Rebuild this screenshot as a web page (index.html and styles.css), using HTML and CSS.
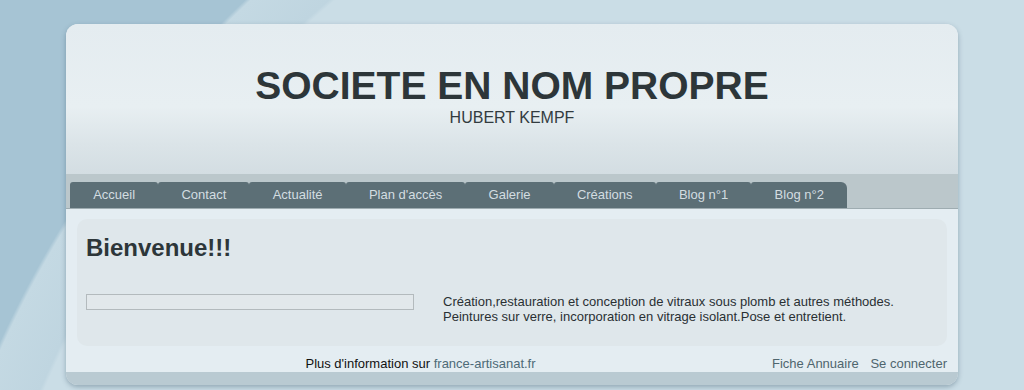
FILE: index.html
```html
<!DOCTYPE html>
<html lang="fr">

<head>
    <meta charset="UTF-8">
    <meta name="viewport" content="width=device-width, initial-scale=1.0">
    <title>Societe en nom propre</title>
    <link rel="stylesheet" href="styles.css">
</head>

<body>
    <div class="page">
        <!-- en-tete -->
        <div class="header">
            <div class="title">SOCIETE EN NOM PROPRE</div>
            <div class="subtitle">HUBERT KEMPF</div>
        </div>

        <!-- menu -->
        <div class="nav">
            <a class="tab" href="#">Accueil</a>
            <a class="tab" href="#">Contact</a>
            <a class="tab" href="#">Actualité</a>
            <a class="tab" href="#">Plan d'accès</a>
            <a class="tab" href="#">Galerie</a>
            <a class="tab" href="#">Créations</a>
            <a class="tab" href="#">Blog n°1</a>
            <a class="tab last" href="#">Blog n°2</a>
        </div>

        <div class="content">
            <div class="panel">
                <h1>Bienvenue!!!</h1>
                <div class="row">
                    <div class="frame"></div>
                    <p class="desc">
                        Création,restauration et conception de vitraux sous plomb et autres méthodes.<br>
                        Peintures sur verre, incorporation en vitrage isolant.Pose et entretient.
                    </p>
                </div>
            </div>

            <div class="footer">
                <div class="info">Plus d'information sur <a href="#">france-artisanat.fr</a></div>
                <div class="links">
                    <a href="#">Fiche Annuaire</a>
                    <a href="#">Se connecter</a>
                </div>
            </div>
        </div>
        <div class="bottom"></div>
    </div>
</body>

</html>
```

FILE: styles.css
```css
html,
body {
    height: 100%;
}

body {
    margin: 0;
    overflow: hidden;
    font-family: "Liberation Sans", Arial, sans-serif;
    font-size: 13px;
    color: #1f2628;
    background: radial-gradient(circle at 1000px 800px,
            #cadde6 0,
            #cadde6 1040px,
            #bfd5e0 1044px,
            #c4d9e3 1096px,
            #a6c4d4 1100px);
}

a {
    text-decoration: none;
}

.page {
    width: 892px;
    margin: 24px auto 0;
    border-radius: 12px;
    overflow: hidden;
    box-shadow: 0 2px 5px rgba(40, 70, 90, 0.35);
    background-color: #e4edf2;
}

.header {
    height: 150px;
    box-sizing: border-box;
    padding-top: 40px;
    text-align: center;
    background: linear-gradient(to bottom, #e4ecf0 0, #e8eff2 55%, #dbe4e8 80%, #d3dde2 100%);
}

.title {
    font-size: 39px;
    font-weight: bold;
    color: #2d3639;
}

.subtitle {
    margin-top: 1px;
    font-size: 16px;
    color: #323b3f;
}

.nav {
    display: flex;
    align-items: flex-end;
    height: 34px;
    padding-left: 4px;
    background-color: #bbc7cb;
    border-bottom: 1px solid #9eacb1;
}

.tab {
    height: 26px;
    line-height: 26px;
    padding: 0 23.2px;
    background-color: #5c6f76;
    color: #d3dde1;
    border-radius: 3px 3px 0 0;
}

.tab.last {
    border-top-right-radius: 6px;
}

.content {
    padding: 10px 11px 0;
}

.panel {
    background-color: #dfe7eb;
    border-radius: 10px;
    padding: 15px 9px 22px;
}

h1 {
    margin: 0;
    font-size: 24px;
    color: #2d3639;
}

.row {
    display: flex;
    margin-top: 32px;
}

.frame {
    width: 326px;
    height: 14px;
    border: 1px solid #b3babd;
    background-color: #e2e8eb;
    margin-right: 29px;
}

.desc {
    margin: 0;
    line-height: 15px;
    color: #2a3033;
}

.footer {
    display: flex;
    padding-top: 10px;
    height: 16px;
    line-height: 15px;
}

.info {
    flex: 1;
    text-align: center;
    color: #111;
}

.info a {
    color: #4d6a77;
}

.links a {
    color: #4f656e;
    margin-left: 8px;
}

.bottom {
    height: 13px;
    background-color: #b9cad2;
}
```
